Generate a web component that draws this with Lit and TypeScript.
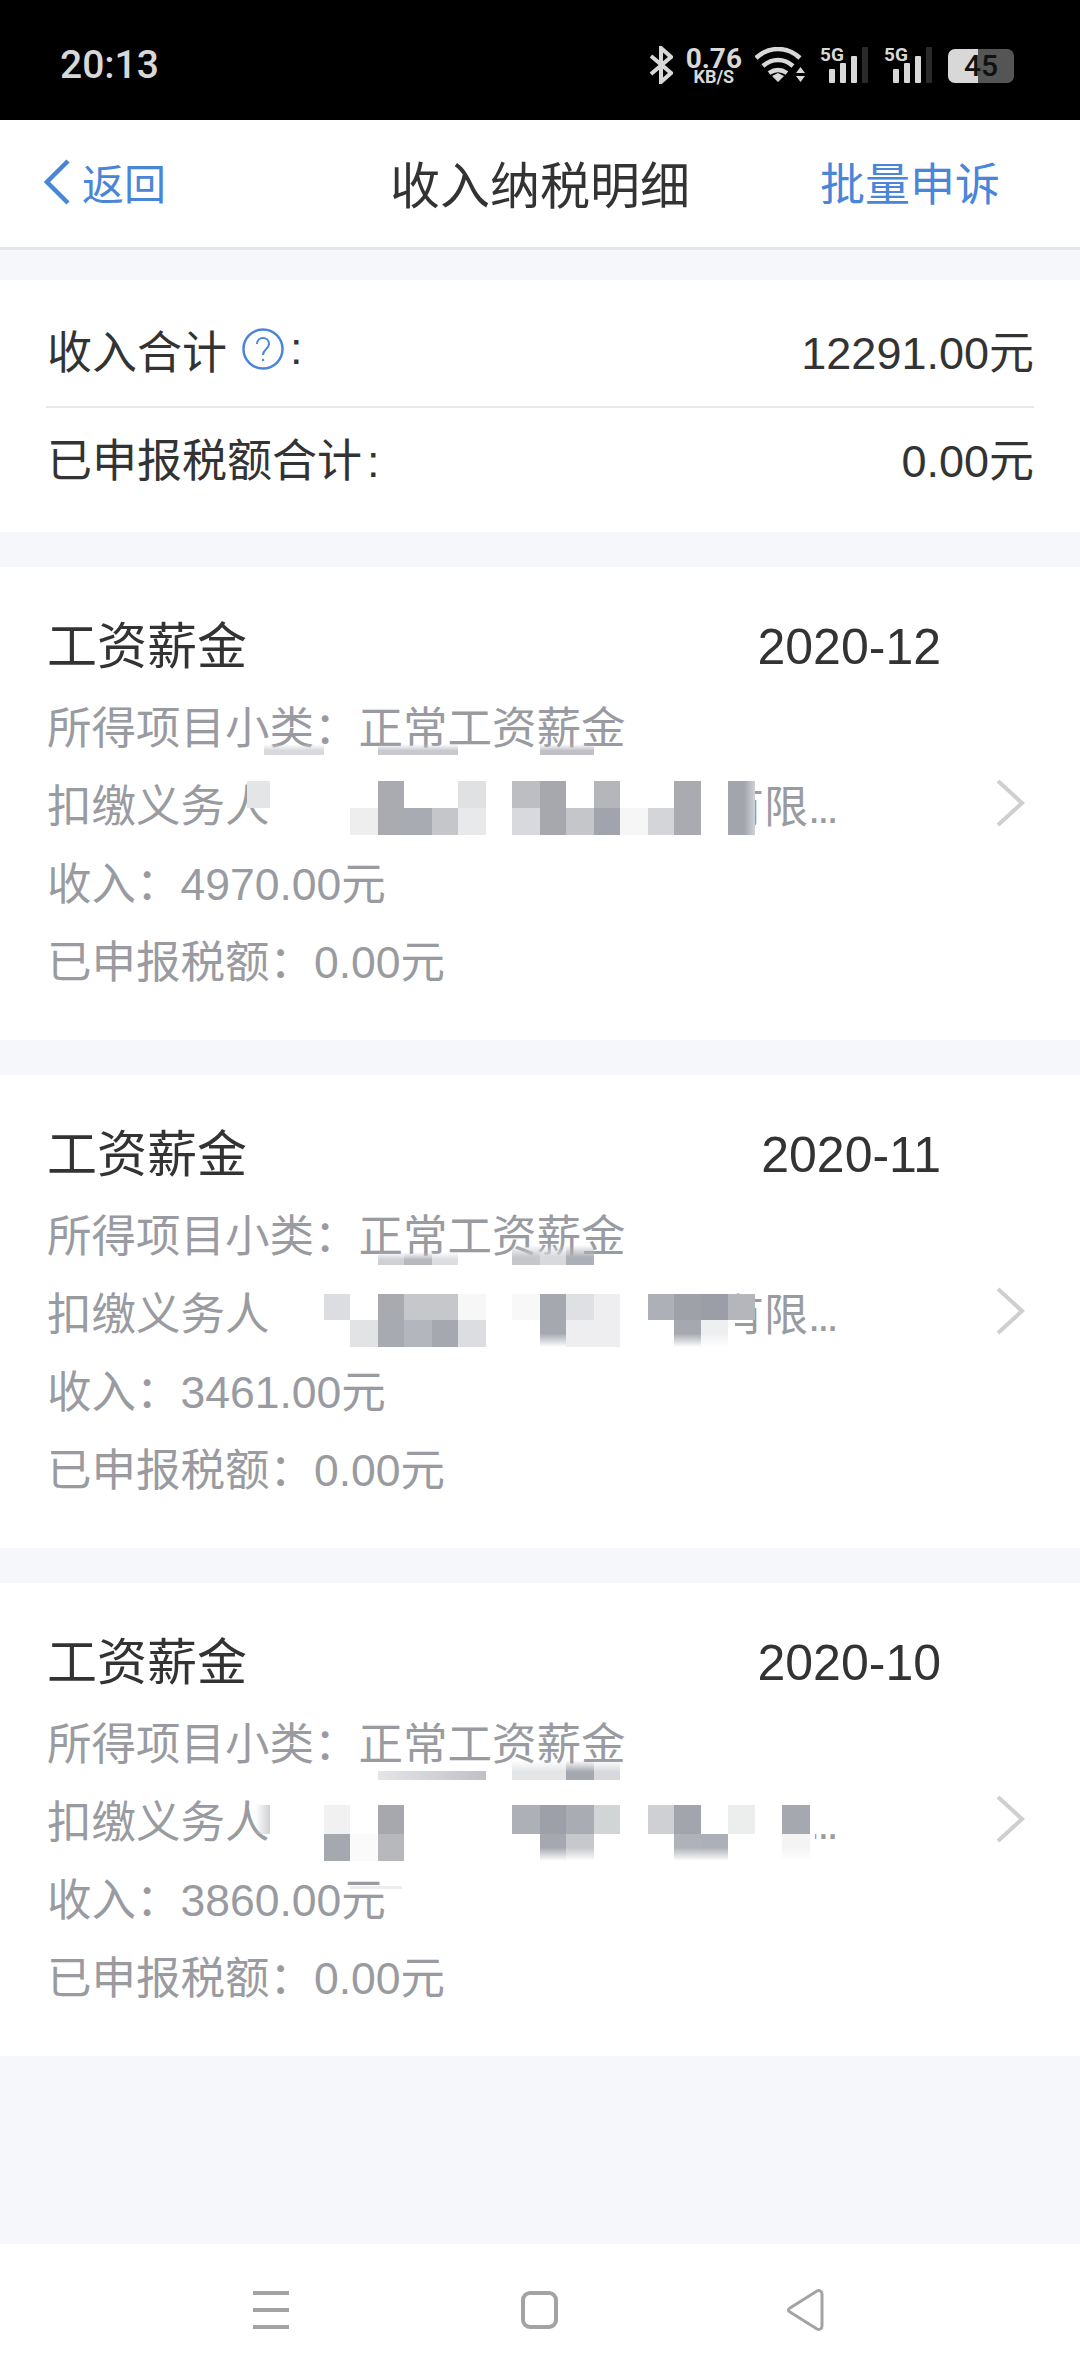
import { LitElement, html, css } from "lit";
import { customElement } from "lit/decorators.js";

// x, y, w, h, background - y is relative to the card top
type Cell = [number, number, number, number, string];

const fadeUp = (c: string) => `linear-gradient(180deg,rgba(255,255,255,0),${c} 60%)`;
const fadeDown = (c: string) => `linear-gradient(180deg,${c} 50%,rgba(255,255,255,0))`;

const records: { amount: string; month: string; cells: Cell[] }[] = [
  {
    amount: "4970.00元",
    month: "2020-12",
    cells: [
      [270, 188, 465, 92, "#fff"],
      [264, 177, 60, 11, fadeUp("#d8d9dc")],
      [378, 177, 80, 11, fadeUp("#c8c9ce")],
      [540, 177, 54, 11, fadeUp("#c0c1c7")],
      [247, 214, 23, 27, "#e4e5e7"],
      [350, 241, 28, 27, "#eeeeef"],
      [378, 214, 26, 54, "#a9abb1"],
      [404, 241, 28, 27, "#a9abb3"],
      [432, 241, 26, 27, "#c4c6ca"],
      [458, 214, 28, 27, "#e0e1e3"],
      [458, 241, 28, 27, "#e8e9eb"],
      [512, 214, 28, 27, "#bcbec2"],
      [512, 241, 28, 27, "#d8d9dc"],
      [540, 214, 26, 54, "#a6a8ad"],
      [566, 241, 28, 27, "#c4c6ca"],
      [594, 214, 26, 27, "#b4b6ba"],
      [594, 241, 26, 27, "#a2a4ad"],
      [620, 241, 28, 27, "#f6f6f7"],
      [648, 241, 26, 27, "#d4d5d8"],
      [674, 214, 27, 54, "#a9abb1"],
      [728, 214, 27, 54, "linear-gradient(90deg,#a2a4ae 60%,#d0d1d6)"],
    ],
  },
  {
    amount: "3461.00元",
    month: "2020-11",
    cells: [
      [270, 190, 465, 92, "#fff"],
      [378, 177, 26, 13, fadeUp("#cfd0d4")],
      [404, 177, 28, 13, fadeUp("#b6b8be")],
      [432, 177, 26, 13, fadeUp("#dcdde0")],
      [512, 170, 28, 20, fadeUp("#c6c7cb")],
      [540, 170, 26, 20, fadeUp("#d8d9dc")],
      [566, 170, 28, 20, fadeUp("#aeb0b7")],
      [324, 219, 26, 26, "#dcdde0"],
      [378, 219, 26, 26, "#a8aab0"],
      [404, 219, 54, 26, "#c6c7cb"],
      [458, 219, 28, 26, "#f7f7f8"],
      [512, 219, 28, 26, "#f8f8f9"],
      [540, 219, 26, 26, "#a6a8b0"],
      [566, 219, 28, 26, "#dfe0e3"],
      [594, 219, 26, 26, "#eeeef0"],
      [648, 219, 26, 26, "#aeb0b7"],
      [674, 219, 27, 26, "#9fa1a9"],
      [701, 219, 27, 26, "#9c9ea7"],
      [728, 219, 27, 26, "#b4b6bb"],
      [350, 245, 28, 27, "#e2e3e5"],
      [378, 245, 26, 27, "#a8aab2"],
      [404, 245, 28, 27, "#b4b6bd"],
      [432, 245, 26, 27, "#a6a8b0"],
      [458, 245, 28, 27, "#dcdde0"],
      [540, 245, 26, 27, fadeDown("#a6a8b0")],
      [566, 245, 54, 27, "#eeeef0"],
      [674, 245, 27, 27, fadeDown("#a6a8af")],
      [701, 245, 27, 27, fadeDown("#eeeff0")],
    ],
  },
  {
    amount: "3860.00元",
    month: "2020-10",
    cells: [
      [270, 197, 545, 92, "#fff"],
      [378, 188, 108, 9, "linear-gradient(90deg,#e4e5e7,#c0c1c6)"],
      [512, 177, 54, 20, fadeUp("#e4e5e7")],
      [566, 177, 28, 20, fadeUp("#a6a8b0")],
      [594, 177, 26, 20, fadeUp("#d8d9dc")],
      [255, 222, 15, 29, "linear-gradient(90deg,rgba(255,255,255,0),#d0d1d4)"],
      [324, 222, 26, 29, "#f1f1f2"],
      [324, 251, 26, 27, "#a6a8b0"],
      [350, 251, 28, 27, "#fafafa"],
      [378, 222, 26, 29, "#a6a8ad"],
      [378, 251, 26, 27, "#b6b8bc"],
      [512, 222, 28, 29, "#aeb0b8"],
      [540, 222, 26, 29, "#9ea0a9"],
      [540, 251, 26, 27, fadeDown("#a6a8b0")],
      [566, 222, 28, 29, "#aaacb3"],
      [566, 251, 28, 27, fadeDown("#c6c8cb")],
      [594, 222, 26, 29, "#d2d5d6"],
      [648, 222, 26, 29, "#cfd0d3"],
      [674, 222, 27, 29, "#a3a5ad"],
      [674, 251, 27, 27, fadeDown("#b0b2b9")],
      [701, 251, 27, 27, fadeDown("#aeb0b7")],
      [728, 222, 27, 29, "#eceded"],
      [782, 222, 28, 29, "#a6a8b0"],
      [782, 251, 28, 27, fadeDown("#f4f4f5")],
      [350, 303, 52, 3, "#eceded"],
    ],
  },
];

@customElement("app-root")
export class AppRoot extends LitElement {
  static styles = css`
    :host {
      display: flex;
      flex-direction: column;
      height: 2376px;
      background: #f5f7fb;
      font-family: "Liberation Sans", "Noto Sans CJK SC", sans-serif;
      color: #333;
    }
    .status {
      height: 120px;
      background: #000;
      color: #d8d8d8;
      display: flex;
      align-items: center;
      justify-content: space-between;
      padding: 10px 66px 0 60px;
      box-sizing: border-box;
      font-family: Roboto, sans-serif;
      flex: none;
    }
    .time {
      font-size: 39px;
      font-weight: 500;
    }
    .status-icons {
      display: flex;
      align-items: center;
      gap: 13px;
    }
    .speed {
      display: flex;
      flex-direction: column;
      align-items: center;
      font-weight: 700;
      font-size: 28px;
      line-height: 23px;
    }
    .speed small {
      font-size: 18px;
      line-height: 14px;
    }
    .net {
      position: relative;
      width: 48px;
      height: 36px;
      margin-left: 1px;
    }
    .net + .net,
    .net + .battery {
      margin-left: 3px;
    }
    .net-label {
      position: absolute;
      left: 0;
      top: -2px;
      font-size: 19px;
      font-weight: 700;
      line-height: 19px;
    }
    .battery {
      position: relative;
      width: 66px;
      height: 34px;
      margin-top: 2px;
      border-radius: 7px;
      background: linear-gradient(90deg, #d8d8d8 0 30px, #555 30px 100%);
      color: #111;
      font-size: 30px;
      font-weight: 500;
      text-align: center;
      line-height: 34px;
    }
    .header {
      height: 130px;
      flex: none;
      box-sizing: border-box;
      background: #fff;
      border-bottom: 3px solid #e2e5e9;
      display: grid;
      grid-template-columns: 1fr auto 1fr;
      align-items: center;
      padding-bottom: 4px;
    }
    .back {
      display: flex;
      align-items: center;
      gap: 12px;
      color: #4a86d8;
      font-size: 42px;
      padding-left: 44px;
    }
    .title {
      font-size: 50px;
      color: #333;
    }
    .batch {
      justify-self: end;
      color: #4a86d8;
      font-size: 45px;
      padding-right: 80px;
    }
    .summary {
      margin-top: 30px;
      background: #fff;
      padding: 0 46px;
      height: 252px;
      flex: none;
    }
    .sum-row {
      height: 126px;
      box-sizing: border-box;
      display: flex;
      align-items: center;
      justify-content: space-between;
      font-size: 45px;
      padding: 12px 0 0 1px;
    }
    .sum-row + .sum-row {
      border-top: 2px solid #e8e8ea;
      padding: 0 0 26px 1px;
    }
    .sum-label {
      display: flex;
      align-items: center;
    }
    .help {
      width: 42px;
      height: 42px;
      margin: 0 6px 0 15px;
    }
    .colon {
      margin-left: 5px;
    }
    .card {
      position: relative;
      height: 473px;
      margin-top: 35px;
      background: #fff;
      flex: none;
      padding: 0 139px 0 47px;
      box-sizing: border-box;
      overflow: hidden;
    }
    .card-head {
      display: flex;
      justify-content: space-between;
      font-size: 50px;
      height: 64px;
      padding-top: 48px;
      margin-bottom: 11px;
      line-height: 64px;
      color: #333;
    }
    .line {
      font-size: 44.5px;
      line-height: 78px;
      height: 78px;
      color: #999ba1;
      white-space: nowrap;
    }
    .cell {
      position: absolute;
    }
    .more {
      position: absolute;
      right: 55px;
      top: 212px;
    }
    .ell {
      position: absolute;
      left: 720px;
      top: 202px;
      font-size: 44px;
      line-height: 78px;
      color: #999ba1;
    }
    .ell i {
      font-style: normal;
      letter-spacing: -3px;
    }
    .spacer {
      flex: 1;
    }
    .nav {
      height: 132px;
      flex: none;
      background: #fff;
    }
    .nav svg {
      display: block;
    }
  `;

  // one cellular group: real label over the four signal bars
  private net() {
    return html`<div class="net">
      <span class="net-label">5G</span>
      <svg width="48" height="36" viewBox="0 0 48 36">
        <rect x="9" y="22" width="6" height="14" rx="1" fill="#d8d8d8" />
        <rect x="20" y="16" width="6" height="20" rx="1" fill="#d8d8d8" />
        <rect x="31" y="9" width="6" height="27" rx="1" fill="#d8d8d8" />
        <rect x="42" y="0" width="6" height="36" rx="1" fill="#2a2a2a" />
      </svg>
    </div>`;
  }

  render() {
    return html`
      <div class="status">
        <span class="time">20:13</span>
        <div class="status-icons">
          <svg width="24" height="38" viewBox="0 0 24 38" fill="none" stroke="#d8d8d8" stroke-width="4">
            <path d="M2 10l20 17-10 9V2l10 9L2 28" />
          </svg>
          <div class="speed">0.76<small>KB/S</small></div>
          <svg width="51" height="36" viewBox="0 0 51 36" fill="none">
            <path d="M1 11c13-12 31-12 44 0M8 19c9-8 21-8 30 0M14 26c6-4 12-4 18 0" stroke="#d8d8d8" stroke-width="4.5" />
            <path d="M17 29l6-3 6 3-6 6zM41 26l4.500-6 4.500 6zM41 29l4.500 6 4.500-6z" fill="#d8d8d8" />
          </svg>
          ${this.net()} ${this.net()}
          <div class="battery">45</div>
        </div>
      </div>

      <div class="header">
        <div class="back">
          <svg width="26" height="46" viewBox="0 0 26 46" fill="none" stroke="#4a86d8" stroke-width="4.5">
            <path d="M24 2L3 23l21 21" />
          </svg>
          <span>返回</span>
        </div>
        <div class="title">收入纳税明细</div>
        <div class="batch">批量申诉</div>
      </div>

      <div class="summary">
        <div class="sum-row">
          <span class="sum-label">收入合计<svg class="help" viewBox="0 0 42 42" fill="none" stroke="#4a86d8">
              <circle cx="21" cy="21" r="19.500" stroke-width="2.500" />
              <path d="M15 16c0-8 12-8 12 0 0 5-6 5-6 11" stroke-width="2" />
              <circle cx="21" cy="32" r="1.200" fill="#4a86d8" stroke="none" />
            </svg>:</span>
          <span>12291.00元</span>
        </div>
        <div class="sum-row">
          <span>已申报税额合计<span class="colon">:</span></span>
          <span>0.00元</span>
        </div>
      </div>

      ${records.map(
        (r) => html`
          <div class="card">
            <div class="card-head"><span>工资薪金</span><span>${r.month}</span></div>
            <div class="line">所得项目小类：正常工资薪金</div>
            <div class="line">扣缴义务人</div>
            <div class="line">收入：${r.amount}</div>
            <div class="line">已申报税额：0.00元</div>
            <span class="ell">有限<i>...</i></span>
            ${r.cells.map(
              ([x, y, w, h, c]) =>
                html`<div class="cell" style="left:${x}px;top:${y}px;width:${w}px;height:${h}px;background:${c}"></div>`
            )}
            <svg class="more" width="30" height="48" viewBox="0 0 30 48" fill="none" stroke="#cfcfd1" stroke-width="4">
              <path d="M3 2l24 22L3 46" />
            </svg>
          </div>
        `
      )}

      <div class="spacer"></div>

      <div class="nav">
        <svg width="1080" height="132" viewBox="0 0 1080 132" fill="none" stroke="#a3a3a3" stroke-width="4">
          <path d="M253 49h36M253 66h36M253 83h36" />
          <rect x="523" y="49" width="33" height="34" rx="7" />
          <path d="M790 64l27-17c2-1 5 0 5 3v32c0 3-3 4-5 3l-27-17c-2-1-2-3 0-4z" stroke-width="3" />
        </svg>
      </div>
    `;
  }
}
